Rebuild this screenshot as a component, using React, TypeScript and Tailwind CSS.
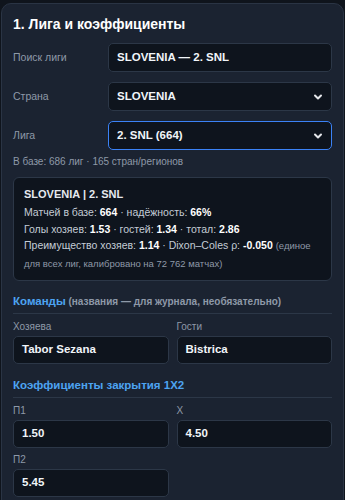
import React from "react";

function Chevron() {
  return (
    <svg width="10" height="10" viewBox="0 0 10 10" className="absolute right-[8px] top-1/2 -translate-y-1/2">
      <path d="M2 3.5 L5 6.5 L8 3.5" fill="none" stroke="#e5e7eb" strokeWidth="2" strokeLinecap="round" strokeLinejoin="round" />
    </svg>
  );
}

function Field({ value, select, focus, small }: { value: string; select?: boolean; focus?: boolean; small?: boolean }) {
  return (
    <div
      className={`relative flex items-center px-[8px] rounded-[5px] bg-[#0e141d] border text-[11.5px] font-bold text-[#f1f5f9] ${
        small ? "h-[28px]" : "h-[29px]"
      } ${focus ? "border-[#3b82f6]" : "border-[#2c3747]"}`}
    >
      {value}
      {select && <Chevron />}
    </div>
  );
}

function Row({ label, children }: { label: string; children: React.ReactNode }) {
  return (
    <div className="grid grid-cols-[95px_1fr] items-center">
      <span className="text-[10.5px] text-[#8e99a8]">{label}</span>
      {children}
    </div>
  );
}

function Labeled({ label, value }: { label: string; value: string }) {
  return (
    <div>
      <p className="text-[10px] leading-[13px] text-[#8e99a8] mb-[3px]">{label}</p>
      <Field value={value} small />
    </div>
  );
}

function SectionTitle({ title, note }: { title: string; note?: string }) {
  return (
    <div className="border-b border-[#2c3747] pb-[4px] text-[11.5px] leading-[15px]">
      <span className="font-bold text-[#4da3f2]">{title}</span>
      {note && <span className="text-[10px] font-bold text-[#8e99a8]"> {note}</span>}
    </div>
  );
}

export default function App() {
  return (
    <div className="min-h-[500px] bg-[#0f141c] pt-[3px] px-[1px] font-['Liberation_Sans',Arial,sans-serif]">
      <div className="rounded-[10px] border border-[#2a3444] bg-[#1b2331] px-[11px] pt-[10px] pb-[12px]">
        <h1 className="text-[14px] leading-[20px] font-bold text-white mb-[9px]">1. Лига и коэффициенты</h1>

        <div className="flex flex-col gap-[10px]">
          <Row label="Поиск лиги">
            <Field value="SLOVENIA — 2. SNL" />
          </Row>
          <Row label="Страна">
            <Field value="SLOVENIA" select />
          </Row>
          <Row label="Лига">
            <Field value="2. SNL (664)" select focus />
          </Row>
        </div>

        <p className="mt-[5px] text-[10px] leading-[14px] text-[#8e99a8]">В базе: 686 лиг · 165 стран/регионов</p>

        <div className="mt-[8px] rounded-[6px] border border-[#2c3747] bg-[#0e141d] px-[10px] py-[8px] text-[10.5px] leading-[16.5px] text-[#c4ccd6]">
          <p className="font-bold text-[#e5e9ef] text-[11px] leading-[17px] mb-[1px]">SLOVENIA | 2. SNL</p>
          <p>
            Матчей в базе: <b className="text-white">664</b> · надёжность: <b className="text-white">66%</b>
          </p>
          <p>
            Голы хозяев: <b className="text-white">1.53</b> · гостей: <b className="text-white">1.34</b> · тотал:{" "}
            <b className="text-white">2.86</b>
          </p>
          <p>
            Преимущество хозяев: <b className="text-white">1.14</b> · Dixon–Coles ρ: <b className="text-white">-0.050</b>{" "}
            <span className="text-[9.5px] leading-[16.5px] text-[#8e99a8]">(единое для всех лиг, калибровано на 72 762 матчах)</span>
          </p>
        </div>

        <div className="mt-[13px]">
          <SectionTitle title="Команды" note="(названия — для журнала, необязательно)" />
          <div className="mt-[6px] grid grid-cols-2 gap-x-[8px]">
            <Labeled label="Хозяева" value="Tabor Sezana" />
            <Labeled label="Гости" value="Bistrica" />
          </div>
        </div>

        <div className="mt-[14px]">
          <SectionTitle title="Коэффициенты закрытия 1X2" />
          <div className="mt-[6px] grid grid-cols-2 gap-x-[8px] gap-y-[5px]">
            <Labeled label="П1" value="1.50" />
            <Labeled label="X" value="4.50" />
            <Labeled label="П2" value="5.45" />
          </div>
        </div>
      </div>
    </div>
  );
}
